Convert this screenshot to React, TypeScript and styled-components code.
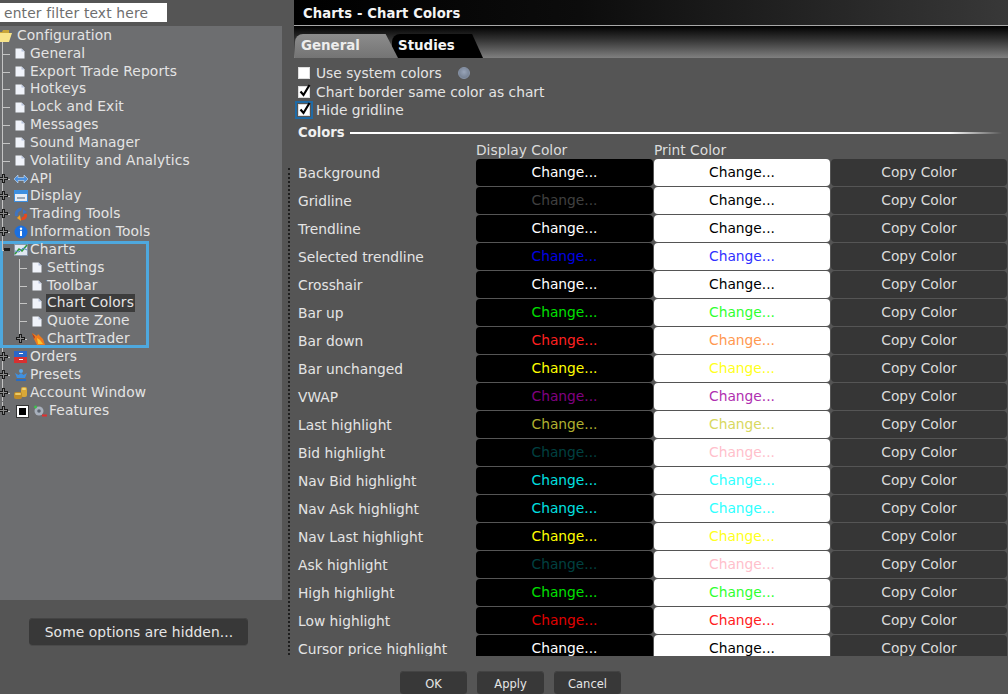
import * as React from 'react';
import styled, { createGlobalStyle } from 'styled-components';

const GlobalStyle = createGlobalStyle`
    html, body {
        margin: 0;
        padding: 0;
        height: 100%;
        background: #555555;
        overflow: hidden;
    }
    #root {
        height: 100%;
    }
`;

const FONT = `"DejaVu Sans", Verdana, sans-serif`;

const Page = styled.div`
    width: 1008px;
    height: 694px;
    display: flex;
    background: #555555;
    font-family: ${FONT};
    font-size: 13.8px;
    color: #e4e4e4;
    overflow: hidden;
`;

/* left column */
const LeftColumn = styled.div`
    width: 282px;
    flex: none;
    display: flex;
    flex-direction: column;
`;
const FilterRow = styled.div`
    height: 26px;
    padding-top: 3px;
    box-sizing: border-box;
`;
const FilterInput = styled.div`
    width: 167px;
    height: 19px;
    box-sizing: border-box;
    background: #ffffff;
    color: #6e6e6e;
    padding-left: 4px;
    line-height: 20px;
    letter-spacing: 0.17px;
    white-space: nowrap;
`;
const TreePanel = styled.div`
    height: 574px;
    background: #6d6e70;
    box-sizing: border-box;
    padding-top: 1px;
    letter-spacing: 0.12px;
`;
const HiddenArea = styled.div`
    flex: 1;
    padding: 18px 0 0 29px;
`;
const DarkButton = styled.div`
    background: #383838;
    border-radius: 4px;
    color: #e6e6e6;
    display: flex;
    align-items: center;
    justify-content: center;
    box-shadow: inset 0 1px 0 #444444, 0 1px 0 #4a4a4a;
`;
const HiddenButton = styled(DarkButton)`
    width: 219px;
    height: 27px;
    padding-left: 1px;
    box-sizing: border-box;
    letter-spacing: 0.1px;
`;

/* tree */
const TreeRow = styled.div<{ $depth: number; $last?: boolean }>`
    position: relative;
    height: 17.84px;
    display: flex;
    align-items: center;
    padding-left: ${(p) => (p.$depth === 0 ? 14 : 31)}px;
    white-space: nowrap;
    line-height: 18px;
    &::before {
        content: '';
        position: absolute;
        left: ${(p) => (p.$depth === 0 ? 2 : 19)}px;
        top: 0;
        bottom: ${(p) => (p.$last ? '50%' : '0')};
        width: 1px;
        background: #c4c4c4;
    }
    &::after {
        content: '';
        position: absolute;
        left: ${(p) => (p.$depth === 0 ? 2 : 19)}px;
        top: 50%;
        width: 8px;
        height: 1px;
        background: #c4c4c4;
    }
`;
const RootRow = styled(TreeRow)`
    padding-left: 0;
    &::before {
        top: 50%;
        left: 2px;
    }
    &::after {
        display: none;
    }
`;
const RowIcon = styled.svg`
    width: 14px;
    height: 14px;
    flex: none;
    margin-right: 2px;
    position: relative;
    z-index: 1;
`;
const DocIcon = styled.svg`
    width: 10px;
    height: 11px;
    flex: none;
    margin: 0 5px 0 1px;
    position: relative;
    z-index: 1;
`;
const Expander = styled.svg`
    position: absolute;
    width: 9px;
    height: 9px;
    top: 4px;
    z-index: 2;
`;
const Label = styled.span<{ $selected?: boolean }>`
    background: ${(p) => (p.$selected ? '#3c3c3c' : 'transparent')};
    padding: 0 1px;
    margin-left: -1px;
    line-height: 17.84px;
`;
const ChartsGroup = styled.div`
    outline: 3px solid #4ea8de;
    outline-offset: -3px;
    width: 149px;
    height: 107px;
`;
const FeatureBox = styled.span`
    width: 7px;
    height: 7px;
    border: 2px solid #ffffff;
    background: #000000;
    outline: 1px solid #333333;
    flex: none;
    margin: 0 5px 0 3px;
    position: relative;
    z-index: 1;
`;

const Doc = () => (
    <DocIcon viewBox="0 0 10 11">
        <path d="M0.5 0.5H6.5L9.5 3.5V10.5H0.5Z" fill="#f0f3fa" />
        <path d="M6.5 0.5V3.5H9.5" fill="#b8c4dc" />
    </DocIcon>
);

const Plus = ({ left }: { left: number }) => (
    <Expander viewBox="0 0 9 9" style={{ left }}>
        <path d="M3 0H6V3H9V6H6V9H3V6H0V3H3Z" fill="#1a1a1a" />
        <path d="M4 1H5V4H8V5H5V8H4V5H1V4H4Z" fill="#8a8a8a" />
    </Expander>
);

const Minus = ({ left }: { left: number }) => (
    <Expander viewBox="0 0 9 9" style={{ left }}>
        <rect x="1" y="3" width="6" height="3" fill="#1a1a1a" />
    </Expander>
);

const Folder = () => (
    <RowIcon viewBox="0 0 14 14" style={{ marginLeft: -2, marginRight: 5 }}>
        <path d="M0 3H4L5 1H11V12H0Z" fill="#c9a63a" />
        <path d="M2 4H14L11 13H0Z" fill="#f8e48a" />
    </RowIcon>
);
const ApiIcon = () => (
    <RowIcon viewBox="0 0 14 14">
        <path d="M0 7L4 3V5.5H10V3L14 7L10 11V8.5H4V11Z" fill="#4a90e0" stroke="#cfe2f8" strokeWidth="0.6" />
    </RowIcon>
);
const DisplayIcon = () => (
    <RowIcon viewBox="0 0 14 14">
        <rect x="0.5" y="1.5" width="13" height="11" fill="#e8eef6" stroke="#3d8fe0" />
        <rect x="1" y="2" width="12" height="3" fill="#3d8fe0" />
        <rect x="3" y="8" width="8" height="2" fill="#9aa8b8" />
    </RowIcon>
);
const TradingIcon = () => (
    <RowIcon viewBox="0 0 14 14">
        <path d="M1 9C0 4 4 0 8 1L7 4C5 4 3 6 4 9Z" fill="#3f74c0" />
        <path d="M9 2L13 5L9 7Z" fill="#3f74c0" />
        <path d="M13 7C14 11 10 14 7 13L8 10C10 10 11 9 10 7Z" fill="#e8481c" />
        <path d="M6 8L3 11L7 14Z" fill="#f4a020" />
    </RowIcon>
);
const InfoIcon = () => (
    <RowIcon viewBox="0 0 14 14">
        <circle cx="7" cy="7" r="6.5" fill="#1a6fe0" />
        <circle cx="7" cy="3.8" r="1.2" fill="#ffffff" />
        <rect x="6" y="5.8" width="2" height="5.2" fill="#ffffff" />
    </RowIcon>
);
const ChartIcon = () => (
    <RowIcon viewBox="0 0 14 14">
        <rect x="0.5" y="1.5" width="13" height="11" fill="#dfe6f0" stroke="#8a97a8" />
        <path d="M1 11L5 6L8 8L13 2" fill="none" stroke="#2f9a3c" strokeWidth="1.6" />
        <path d="M1 8L5 9L9 5L13 7" fill="none" stroke="#5a88c8" strokeWidth="1" />
    </RowIcon>
);
const FlameIcon = () => (
    <RowIcon viewBox="0 0 14 14">
        <path d="M1 1L6 4L7 2L12 7L14 13H6L3 7Z" fill="#ee7a1c" />
        <path d="M6 6L9 8L12 12H7Z" fill="#f8c430" />
        <path d="M1 1L4 5L3 7Z" fill="#a83a20" />
    </RowIcon>
);
const OrdersIcon = () => (
    <RowIcon viewBox="0 0 14 14">
        <rect x="0" y="1" width="13" height="6" fill="#2a66c8" />
        <rect x="0" y="7" width="13" height="6" fill="#d83030" />
        <rect x="5" y="3" width="4" height="1" fill="#ffffff" />
        <rect x="5" y="9" width="4" height="1" fill="#ffffff" />
    </RowIcon>
);
const PresetsIcon = () => (
    <RowIcon viewBox="0 0 14 14">
        <circle cx="7" cy="3" r="2" fill="#58a8ec" />
        <path d="M1 5L4.5 7L7 5L9.5 7L13 5L11 10H3Z" fill="#3f90e0" />
        <rect x="2" y="11" width="10" height="2" fill="#2a6cc0" />
    </RowIcon>
);
const CoinsIcon = () => (
    <RowIcon viewBox="0 0 14 14">
        <rect x="7" y="1" width="6" height="10" rx="2" fill="#d8a838" />
        <rect x="0" y="6" width="8" height="7" rx="2" fill="#c08c28" />
        <rect x="1" y="7" width="6" height="2" rx="1" fill="#eccb66" />
        <rect x="8" y="2" width="4" height="2" rx="1" fill="#f0d478" />
    </RowIcon>
);
const FeaturesIcon = () => (
    <RowIcon viewBox="0 0 14 14" style={{ marginRight: 2 }}>
        <circle cx="6" cy="7" r="4.5" fill="#a8b0bc" />
        <circle cx="6" cy="7" r="1.8" fill="#5c6470" />
        <path d="M1 3H4M2.5 1.5V4.5" stroke="#3cc04c" strokeWidth="1.4" />
        <rect x="9" y="10.5" width="5" height="2" fill="#e03030" />
    </RowIcon>
);

const Tree = () => (
    <TreePanel>
        <RootRow $depth={0}>
            <Folder />
            <Label>Configuration</Label>
        </RootRow>
        {['General', 'Export Trade Reports', 'Hotkeys', 'Lock and Exit', 'Messages', 'Sound Manager', 'Volatility and Analytics'].map((name) => (
            <TreeRow $depth={0} key={name}>
                <Doc />
                <Label>{name}</Label>
            </TreeRow>
        ))}
        <TreeRow $depth={0}>
            <Plus left={-1} />
            <ApiIcon />
            <Label>API</Label>
        </TreeRow>
        <TreeRow $depth={0}>
            <Plus left={-1} />
            <DisplayIcon />
            <Label>Display</Label>
        </TreeRow>
        <TreeRow $depth={0}>
            <Plus left={-1} />
            <TradingIcon />
            <Label>Trading Tools</Label>
        </TreeRow>
        <TreeRow $depth={0}>
            <Plus left={-1} />
            <InfoIcon />
            <Label>Information Tools</Label>
        </TreeRow>
        <ChartsGroup>
            <TreeRow $depth={0} $last>
                <Minus left={3} />
                <ChartIcon />
                <Label>Charts</Label>
            </TreeRow>
            {['Settings', 'Toolbar', 'Chart Colors', 'Quote Zone'].map((name) => (
                <TreeRow $depth={1} key={name}>
                    <Doc />
                    <Label $selected={name === 'Chart Colors'}>{name}</Label>
                </TreeRow>
            ))}
            <TreeRow $depth={1} $last>
                <Plus left={16} />
                <FlameIcon />
                <Label>ChartTrader</Label>
            </TreeRow>
        </ChartsGroup>
        <TreeRow $depth={0}>
            <Plus left={-1} />
            <OrdersIcon />
            <Label>Orders</Label>
        </TreeRow>
        <TreeRow $depth={0}>
            <Plus left={-1} />
            <PresetsIcon />
            <Label>Presets</Label>
        </TreeRow>
        <TreeRow $depth={0}>
            <Plus left={-1} />
            <CoinsIcon />
            <Label>Account Window</Label>
        </TreeRow>
        <TreeRow $depth={0} $last style={{ marginTop: 1 }}>
            <Plus left={-1} />
            <FeatureBox />
            <FeaturesIcon />
            <Label>Features</Label>
        </TreeRow>
    </TreePanel>
);

/* right column */
const RightColumn = styled.div`
    flex: 1;
    min-width: 0;
    display: flex;
    flex-direction: column;
    margin-left: 12px;
    position: relative;
`;
const TitleBar = styled.div`
    height: 25px;
    flex: none;
    background: linear-gradient(90deg, #000000 0%, #0c0c0c 40%, #383838 100%);
    border-bottom: 1px solid #a8a8a8;
    color: #f4f4f4;
    font-weight: bold;
    font-size: 13.2px;
    letter-spacing: 0.1px;
    padding-left: 9px;
    line-height: 27px;
`;
const TabStrip = styled.div`
    height: 32px;
    flex: none;
    box-sizing: border-box;
    padding: 8px 0 0 1px;
    display: flex;
    background: linear-gradient(180deg, #000000 0%, #303030 40%, #808080 100%);
`;
const Tab = styled.div<{ $active?: boolean }>`
    height: 24px;
    box-sizing: border-box;
    font-weight: bold;
    font-size: 13.4px;
    line-height: 24px;
    border-top-left-radius: 8px;
    border-top-right-radius: 8px;
    width: ${(p) => (p.$active ? 103 : 91)}px;
    margin-left: ${(p) => (p.$active ? 0 : -6)}px;
    padding-left: ${(p) => (p.$active ? 6 : 6)}px;
    background: ${(p) => (p.$active ? 'linear-gradient(180deg, #8c8c8c, #747474)' : '#000000')};
    color: ${(p) => (p.$active ? '#ededed' : '#f4f4f4')};
    position: relative;
    z-index: ${(p) => (p.$active ? 1 : 0)};
    clip-path: polygon(0 0, 88% 0, 100% 100%, 0 100%);
`;
const Options = styled.div`
    height: 66px;
    flex: none;
    box-sizing: border-box;
    padding: 6px 0 0 4px;
    display: flex;
    flex-direction: column;
`;
const OptionRow = styled.div`
    height: 18.6px;
    display: flex;
    align-items: center;
    flex: none;
    white-space: nowrap;
`;
const CheckBox = styled.span<{ $focused?: boolean }>`
    width: 12px;
    height: 12px;
    flex: none;
    margin-right: 6px;
    background: #ffffff;
    border: 1px solid #dddddd;
    box-sizing: border-box;
    display: flex;
    position: relative;
    outline: ${(p) => (p.$focused ? '2px solid #1f6aa5' : 'none')};
    outline-offset: 1px;
`;
const CheckMark = styled.svg`
    position: absolute;
    left: -1px;
    top: -4px;
    width: 14px;
    height: 15px;
`;
const HelpDot = styled.span`
    width: 12px;
    height: 12px;
    border-radius: 50%;
    margin-left: 16px;
    background: radial-gradient(circle at 50% 40%, #98a4b8, #6a7688);
    border: 1px solid #8894a8;
    box-sizing: border-box;
    flex: none;
`;
const LegendRow = styled.div`
    height: 17px;
    flex: none;
    display: flex;
    align-items: center;
    padding-left: 4px;
    font-weight: bold;
    font-size: 13.2px;
    gap: 5px;
    color: #f0f0f0;
`;
const LegendLine = styled.div`
    flex: 1;
    height: 2px;
    margin-right: 6px;
    background: linear-gradient(90deg, #ffffff 0%, #ffffff 92%, #555555 100%);
`;
const HeaderRow = styled.div`
    height: 18px;
    flex: none;
    display: grid;
    grid-template-columns: 182px 178px 1fr;
    line-height: 19px;
    color: #dcdcdc;
`;
const Rows = styled.div`
    height: 497px;
    flex: none;
    overflow: hidden;
    display: flex;
    flex-direction: column;
`;
const DottedRule = styled.div`
    position: absolute;
    left: -6px;
    top: 168px;
    bottom: 39px;
    width: 0;
    border-left: 2px dotted #1e1e1e;
`;
const ColorRow = styled.div`
    height: 28px;
    flex: none;
    display: grid;
    grid-template-columns: 182px 178px 177px 177px;
    align-items: start;
`;
const RowName = styled.div`
    padding-left: 4px;
    line-height: 28px;
    white-space: nowrap;
    color: #e4e4e4;
`;
const ColorButton = styled.div<{ $bg: string; $fg: string }>`
    height: 27px;
    box-sizing: border-box;
    margin-right: 1px;
    border-radius: 4px;
    background: ${(p) => p.$bg};
    color: ${(p) => p.$fg};
    text-align: center;
    line-height: 26px;
`;
const Footer = styled.div`
    flex: 1;
    display: flex;
    align-items: flex-start;
    gap: 10px;
    padding: 15px 0 0 106px;
    font-size: 11.5px;
`;
const FooterButton = styled(DarkButton)`
    width: 67px;
    height: 23px;
    padding-top: 2px;
    box-sizing: border-box;
`;

type RowData = { name: string; display: string; print: string };
const rows: RowData[] = [
    { name: 'Background', display: '#ffffff', print: '#000000' },
    { name: 'Gridline', display: '#404040', print: '#000000' },
    { name: 'Trendline', display: '#ffffff', print: '#000000' },
    { name: 'Selected trendline', display: '#0000e0', print: '#3030ff' },
    { name: 'Crosshair', display: '#ffffff', print: '#000000' },
    { name: 'Bar up', display: '#00e000', print: '#30ff30' },
    { name: 'Bar down', display: '#ff2020', print: '#ff9850' },
    { name: 'Bar unchanged', display: '#ffff00', print: '#ffff20' },
    { name: 'VWAP', display: '#800080', print: '#b030b0' },
    { name: 'Last highlight', display: '#b0b030', print: '#d8d860' },
    { name: 'Bid highlight', display: '#004040', print: '#ffc0cb' },
    { name: 'Nav Bid highlight', display: '#00e0e0', print: '#30ffff' },
    { name: 'Nav Ask highlight', display: '#00e0e0', print: '#30ffff' },
    { name: 'Nav Last highlight', display: '#ffff00', print: '#ffff20' },
    { name: 'Ask highlight', display: '#004040', print: '#ffc0cb' },
    { name: 'High highlight', display: '#00e000', print: '#30ff30' },
    { name: 'Low highlight', display: '#e00000', print: '#ff2020' },
    { name: 'Cursor price highlight', display: '#ffffff', print: '#000000' },
];

const Check = () => (
    <CheckMark viewBox="0 0 14 15">
        <path d="M2.5 8.5L5.5 12L11.5 2" fill="none" stroke="#000000" strokeWidth="2.2" />
    </CheckMark>
);

const App = () => (
    <Page>
        <GlobalStyle />
        <LeftColumn>
            <FilterRow>
                <FilterInput>enter filter text here</FilterInput>
            </FilterRow>
            <Tree />
            <HiddenArea>
                <HiddenButton>Some options are hidden...</HiddenButton>
            </HiddenArea>
        </LeftColumn>
        <RightColumn>
            <DottedRule />
            <TitleBar>Charts - Chart Colors</TitleBar>
            <TabStrip>
                <Tab $active>General</Tab>
                <Tab>Studies</Tab>
            </TabStrip>
            <Options>
                <OptionRow>
                    <CheckBox />
                    Use system colors
                    <HelpDot />
                </OptionRow>
                <OptionRow>
                    <CheckBox><Check /></CheckBox>
                    Chart border same color as chart
                </OptionRow>
                <OptionRow>
                    <CheckBox $focused><Check /></CheckBox>
                    Hide gridline
                </OptionRow>
            </Options>
            <LegendRow>
                Colors
                <LegendLine />
            </LegendRow>
            <HeaderRow>
                <span />
                <span>Display Color</span>
                <span>Print Color</span>
            </HeaderRow>
            <Rows>
                {rows.map((row) => (
                    <ColorRow key={row.name}>
                        <RowName>{row.name}</RowName>
                        <ColorButton $bg="#000000" $fg={row.display}>Change...</ColorButton>
                        <ColorButton $bg="#ffffff" $fg={row.print}>Change...</ColorButton>
                        <ColorButton $bg="#363636" $fg="#dcdcdc">Copy Color</ColorButton>
                    </ColorRow>
                ))}
            </Rows>
            <Footer>
                <FooterButton>OK</FooterButton>
                <FooterButton>Apply</FooterButton>
                <FooterButton>Cancel</FooterButton>
            </Footer>
        </RightColumn>
    </Page>
);

export default App;
